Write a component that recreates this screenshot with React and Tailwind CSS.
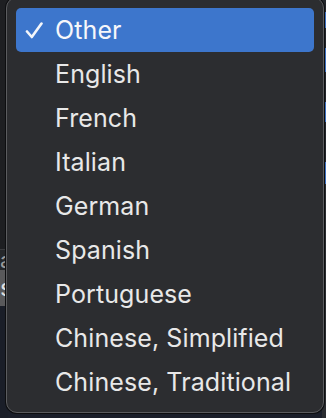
import React from "react";

const items = [
  "Other",
  "English",
  "French",
  "Italian",
  "German",
  "Spanish",
  "Portuguese",
  "Chinese, Simplified",
  "Chinese, Traditional",
];

function Check() {
  return (
    <svg width="18" height="17" viewBox="0 0 18 17" className="ml-[9px]">
      <path
        d="M2 9.5 L6.8 15 L16.5 1.5"
        fill="none"
        stroke="#f4f6fa"
        strokeWidth="2.6"
        strokeLinecap="round"
        strokeLinejoin="round"
      />
    </svg>
  );
}

export default function App() {
  return (
    <div
      className="relative w-[326px] h-[418px] overflow-hidden bg-[#1b1f2a]"
      style={{ fontFamily: "Inter, 'Liberation Sans', sans-serif" }}
    >
      {/* background window content */}
      <div className="flex h-full w-full">
        <div className="flex flex-col w-[8px] h-full">
          <div className="h-[249px] bg-[#1e1f22]" />
          <div className="h-px bg-[#3a3b3e]" />
          <div className="h-[20px] bg-[#25272a] text-[#9a9a9a] text-[22px] leading-[20px] overflow-hidden">
            a
          </div>
          <div className="h-[36px] bg-[#59595b] text-[#e0e0e0] text-[24px] leading-[36px] overflow-hidden">
            s
          </div>
          <div className="flex-1 bg-[#1a1e28]" />
        </div>
        <div className="flex-1" />
        <div className="flex flex-col w-[4px] h-full">
          <div className="h-[12px] bg-[#23262b]" />
          <div className="h-[16px] bg-[#3b6fc0]" />
          <div className="h-[20px] bg-[#23262b]" />
          <div className="h-[24px] bg-[#3b6fc0]" />
          <div className="h-[30px] bg-[#23262b]" />
          <div className="h-[20px] bg-[#3b6fc0]" />
          <div className="h-[40px] bg-[#23262b]" />
          <div className="h-[22px] bg-[#3b6fc0]" />
          <div className="flex-1 bg-[#2a2c30]" />
        </div>
      </div>

      {/* popup menu */}
      <div className="absolute left-[6px] top-[-3px] w-[318px] h-[416px] rounded-[11px] border border-[#5b5c5f] bg-[#2c2d30] shadow-[0_0_0_1px_#0d0e10] pt-[10px] px-[9px]">
        {items.map((label, i) => (
          <div
            key={label}
            className={
              i === 0
                ? "flex items-center h-[44px] rounded-[5px] bg-[#3d76cc] text-[#f6f7fa]"
                : "flex items-center h-[44px] rounded-[5px] text-[#e8e8e8]"
            }
          >
            <span className="flex items-center w-[39px]">
              {i === 0 ? <Check /> : null}
            </span>
            <span className="text-[25px] leading-none tracking-[0.1px]">{label}</span>
          </div>
        ))}
      </div>
    </div>
  );
}
